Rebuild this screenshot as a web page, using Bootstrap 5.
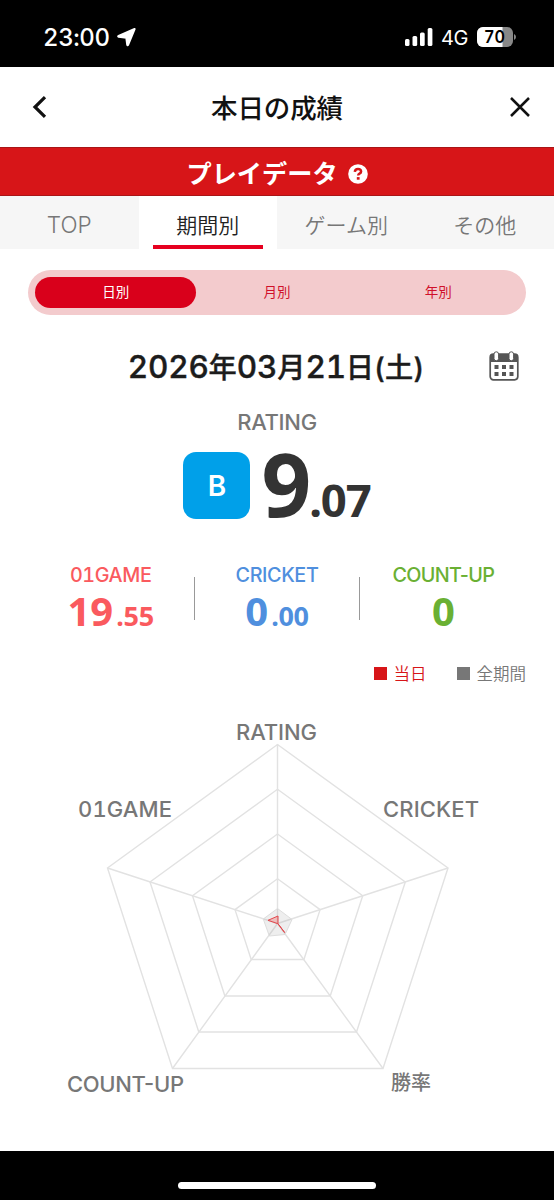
<!DOCTYPE html>
<html lang="ja">
<head>
<meta charset="utf-8">
<meta name="viewport" content="width=device-width, initial-scale=1">
<title>本日の成績</title>
<link href="https://cdn.jsdelivr.net/npm/bootstrap@5.3.0/dist/css/bootstrap.min.css" rel="stylesheet">
<style>
  body { font-family: Inter, "Noto Sans CJK JP", sans-serif; font-variant-numeric: tabular-nums; color: #1a1a1a; line-height: 1; width: 554px; height: 1200px; overflow: hidden; }
  .statusbar { height: 67px; background: #000; color: #fff; padding: 7px 38px 0 43px; }
  .clock { font-size: 24px; font-weight: 500; letter-spacing: -.4px; padding-top: 1px; }
  .titlebar { height: 80px; padding: 0 23px 0 32px; }
  .titlebar h1 { font-size: 26.5px; font-weight: 500; color: #111; letter-spacing: -.1px; padding: 3px 3px 0 0; }
  .banner { height: 49px; background: #d71518; border-top: 1px solid #a91517; border-bottom: 1px solid #a91517; font-size: 25.2px; }
  .banner span { padding-top: 6px; }
  .banner svg { margin-top: 5px; }
  .period-tabs { height: 53px; background: #f6f6f6; font-size: 21px; font-weight: 350; color: #777; }
  .period-tabs .nav-link { color: inherit; padding: 3px 0 0; height: 53px; font-family: "Noto Sans CJK JP", sans-serif; }
  .period-tabs .nav-link.latin { font-family: Inter, sans-serif; font-size: 22.5px; font-weight: 300; padding-top: 5px; letter-spacing: 0; }
  .period-tabs .nav-link.active { background: #fff; color: #222; }
  .period-tabs .nav-link.active::after { content: ""; position: absolute; left: 14px; right: 14px; bottom: 0; height: 4px; background: #e60020; }
  .segment { margin: 21px 28px 0; height: 45px; padding: 7px; background: #f3cbcd; font-size: 13.5px; color: #d0102a; }
  .segment .on { background: #d9001b; color: #fff; }
  .date-row { height: 60px; margin-top: 21px; padding-right: 35px; padding-left: 63px; }
  .date-row h2 { font-size: 28.2px; font-weight: 500; color: #1c1c1c; padding-top: 2px; -webkit-text-stroke: .4px #1c1c1c; }
  .date-row h2 b { font-size: 31.5px; font-weight: 500; letter-spacing: -.2px; }
  .grey { color: #777; }
  .rating-label { font-size: 22px; font-weight: 500; height: 22px; margin-top: 15px; letter-spacing: -.3px; }
  .score { font-family: "Noto Sans", sans-serif; font-weight: 700; }
  .rating-row { height: 68px; margin-top: 19px; }
  .rank { width: 67px; height: 67px; border-radius: 13px; background: #00a0e9; font-size: 28px; font-weight: 600; }
  .rating-value { color: #333; font-size: 87px; line-height: 62px; margin-left: 11px; }
  .rating-value span { font-size: 45.5px; letter-spacing: -1.2px; line-height: 1; margin-left: -2px; }
  .stats { margin: 45px 28px 0; height: 71px; }
  .stats h3 { font-size: 19.8px; font-weight: 500; letter-spacing: -.4px; margin: 0; height: 20px; white-space: nowrap; line-height: 20px; }
  .stats h3.plain { font-variant-numeric: normal; letter-spacing: -.7px; }
  .stats .score { font-size: 40px; line-height: 51px; }
  .stats .score span { font-size: 27px; margin-left: 3px; letter-spacing: -.3px; line-height: 1; }
  .rule { width: 1px; height: 43px; background: #999; margin: 12px -1px 0 1px; }
  .rule.second { margin: 12px 1px 0 -1px; }
  .legend { margin: 27px 28px 0; height: 20px; font-size: 16.5px; font-weight: 350; gap: 30px; font-family: "Noto Sans CJK JP", sans-serif; }
  .legend i { width: 13px; height: 13px; margin-right: 7px; background: currentColor; }
  .red { color: #d71518; }
  .homebar { height: 49px; background: #000; padding-top: 31px; }
  .homebar div { width: 198px; height: 7px; }
  .radar text { font-size: 22px; font-weight: 500; fill: #777; }
</style>
</head>
<body class="d-flex flex-column bg-white">
  <div class="statusbar d-flex align-items-center flex-shrink-0">
    <span class="clock">23:00</span>
    <svg style="margin-left:7px" width="19" height="19" viewBox="0 0 19 19"><path d="M17.6 1 11 17q-.5.8-.8-.3L9.3 9.7 1.6 8.8Q.6 8.4 1.6 7.8Z" fill="#fff" stroke="#fff" stroke-width="2" stroke-linejoin="round"/></svg>
    <svg class="ms-auto" width="29" height="18" fill="#fff"><rect x="1" y="11" width="4.5" height="7" rx="1.5"/><rect x="8.5" y="8" width="4.7" height="10" rx="1.5"/><rect x="16" y="4.5" width="4.7" height="13.5" rx="1.5"/><rect x="23.7" y="0" width="4.7" height="18" rx="1.5"/></svg>
    <span style="font-size:20px;margin-left:8px;letter-spacing:-.4px;padding-top:2px">4G</span>
    <svg style="margin-left:9px" width="39" height="20"><defs><clipPath id="cell"><rect width="36" height="20" rx="6"/></clipPath></defs><g clip-path="url(#cell)"><rect width="36" height="20" fill="#888"/><rect width="25.5" height="20" fill="#fff"/></g><path d="M37 7Q39 8 39 10T37 13Z" fill="#888"/><text x="7" y="16.2" font-size="17.5" font-weight="600" textLength="21" lengthAdjust="spacingAndGlyphs">70</text></svg>
  </div>
  <header class="titlebar d-flex align-items-center justify-content-between flex-shrink-0">
    <svg width="16" height="22" viewBox="0 0 16 22" fill="none" stroke="#111" stroke-width="3.2"><path d="M13 1.2 3 11l10 9.8"/></svg>
    <h1 class="mb-0">本日の成績</h1>
    <svg width="22" height="22" viewBox="0 0 22 22" fill="none" stroke="#111" stroke-width="2.5"><path d="m2 2 18 18M20 2 2 20"/></svg>
  </header>
  <div class="banner text-white fw-bold d-flex align-items-center justify-content-center flex-shrink-0">
    <span>プレイデータ</span>
    <svg style="margin-left:10px" width="20" height="20"><circle cx="10" cy="10" r="9.8" fill="#fff"/><path d="M6.8 7.8Q7.1 5 10 5t3.1 2.5q0 1.4-1.6 2.2-1.3.7-1.3 1.9" fill="none" stroke="#d71518" stroke-width="2.5"/><rect x="8.8" y="13.1" width="2.8" height="2.6" fill="#d71518"/></svg>
  </div>
  <nav class="period-tabs nav nav-fill flex-shrink-0 row row-cols-4 g-0">
    <a class="nav-link latin col d-flex align-items-center justify-content-center">TOP</a>
    <a class="nav-link col active position-relative d-flex align-items-center justify-content-center">期間別</a>
    <a class="nav-link col d-flex align-items-center justify-content-center">ゲーム別</a>
    <a class="nav-link col d-flex align-items-center justify-content-center">その他</a>
  </nav>
  <div class="segment rounded-pill d-flex flex-shrink-0">
    <div class="on rounded-pill flex-fill w-100 d-flex align-items-center justify-content-center">日別</div>
    <div class="w-100 d-flex align-items-center justify-content-center">月別</div>
    <div class="w-100 d-flex align-items-center justify-content-center">年別</div>
  </div>
  <div class="date-row d-flex align-items-center flex-shrink-0">
    <h2 class="mb-0 flex-fill text-center text-nowrap"><b>2026</b>年<b>03</b>月<b>21</b>日(土)</h2>
    <svg width="30" height="30" viewBox="0 0 30 30"><rect x="1.2" y="3.2" width="27.6" height="25.6" rx="3.2" fill="#fff" stroke="#555" stroke-width="1.7"/><path d="M1 11V6q0-3 3-3h22q3 0 3 3v5z" fill="#555"/><rect x="5" y=".8" width="4.6" height="9" rx="2.3" fill="#fff" stroke="#555"/><rect x="20" y=".8" width="4.6" height="9" rx="2.3" fill="#fff" stroke="#555"/><path d="M5.5 14h4v4h-4zM13 14h4v4h-4zM20.5 14h4v4h-4zM5.5 21h4v4h-4zM13 21h4v4h-4zM20.5 21h4v4h-4z" fill="#555"/></svg>
  </div>
  <div class="rating-label grey text-center flex-shrink-0">RATING</div>
  <div class="rating-row d-flex justify-content-center flex-shrink-0">
    <div class="rank text-white d-flex align-items-center justify-content-center">B</div>
    <div class="rating-value score">9<span>.07</span></div>
  </div>
  <div class="stats d-flex text-center flex-shrink-0">
    <div class="col" style="color:#fa5a5e"><h3>01GAME</h3><div class="score">19<span>.55</span></div></div>
    <div class="rule"></div>
    <div class="col" style="color:#4f8fde"><h3>CRICKET</h3><div class="score">0<span>.00</span></div></div>
    <div class="rule second"></div>
    <div class="col" style="color:#6ab033"><h3 class="plain">COUNT-UP</h3><div class="score">0</div></div>
  </div>
  <div class="legend d-flex justify-content-end flex-shrink-0">
    <div class="red d-flex align-items-center"><i></i>当日</div>
    <div class="grey d-flex align-items-center"><i></i>全期間</div>
  </div>
  <svg class="radar flex-shrink-0" width="554" height="468" viewBox="0 683 554 468">
    <g fill="none" stroke="#e2e2e2" stroke-width="1.4">
      <path d="M277.5 744.5 448 868 383 1068.5H172.5L107.5 868Z"/>
      <path d="M277.5 789.3 405.3 882 356.5 1032H198.8L150 882Z"/>
      <path d="M277.5 834 362.7 895.8 330.2 996H224.9L192.5 895.8Z"/>
      <path d="M277.5 878.8 320.1 909.6 303.9 959.5H251.2L235 909.6Z"/>
      <path d="M277.5 923.5V744.5M277.5 923.5 448 868M277.5 923.5 383 1068.5M277.5 923.5 172.5 1068.5M277.5 923.5 107.5 868"/>
    </g>
    <path d="M277.5 908.5 292 919.5 285 934.5 269.3 936 263.3 919Z" fill="#999" fill-opacity=".17" stroke="#ddd"/>
    <path d="M278 916v7.8l6.7 8.8-6.7-8.8-10-3.5Z" fill="#f05050" fill-opacity=".3" stroke="#e5484d" stroke-width="1"/>
    <text x="236" y="740" textLength="81">RATING</text>
    <text x="78" y="817" textLength="94">01GAME</text>
    <text x="383" y="817" textLength="96">CRICKET</text>
    <text x="67" y="1091.5" textLength="117" style="font-variant-numeric:normal">COUNT-UP</text>
    <text x="391" y="1090" style="font-size:20px">勝率</text>
  </svg>
  <footer class="homebar flex-shrink-0"><div class="bg-white rounded-pill mx-auto"></div></footer>
</body>
</html>
